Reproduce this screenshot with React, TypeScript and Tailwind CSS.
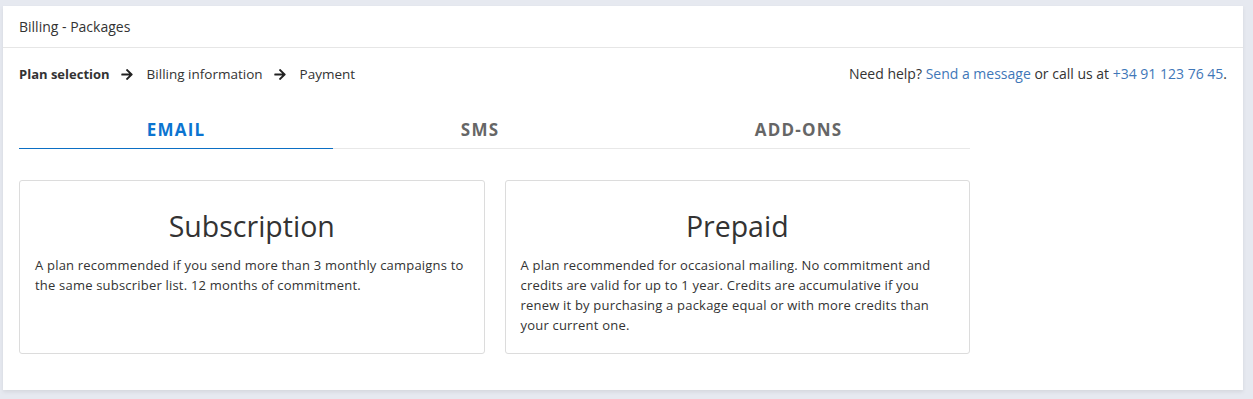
const tabs = [
  { label: 'EMAIL', active: true },
  { label: 'SMS', active: false },
  { label: 'ADD-ONS', active: false },
];

const plans = [
  {
    title: 'Subscription',
    text: 'A plan recommended if you send more than 3 monthly campaigns to the same subscriber list. 12 months of commitment.',
  },
  {
    title: 'Prepaid',
    text: 'A plan recommended for occasional mailing. No commitment and credits are valid for up to 1 year. Credits are accumulative if you renew it by purchasing a package equal or with more credits than your current one.',
  },
];

function Arrow() {
  return (
    <svg viewBox="0 0 448 512" className="mx-[11px] h-[13px] w-[12px] fill-[#222]">
      <path d="M190.5 66.9l22.2-22.2c9.4-9.4 24.6-9.4 33.9 0L441 239c9.4 9.4 9.4 24.6 0 33.9L246.6 467.3c-9.4 9.4-24.6 9.4-33.9 0l-22.2-22.2c-9.5-9.5-9.3-25 .4-34.3L311.4 296H24c-13.3 0-24-10.7-24-24v-32c0-13.3 10.7-24 24-24h287.4L190.9 101.2c-9.8-9.3-10-24.8-.4-34.3z" />
    </svg>
  );
}

export default function App() {
  return (
    <div className="min-h-[399px] bg-[#e6e9f0] pl-[3px] pr-[10px] pt-[6px] pb-[9px] font-['Open_Sans','Lato',sans-serif] text-[13px] text-[#333]">
      <div className="bg-white shadow-[0_2px_4px_rgba(0,0,0,0.08)]">
        {/* Header */}
        <div className="flex h-[42px] items-center border-b border-[#e6e6e6] px-4">
          <span className="text-[14px] text-[#333]">Billing - Packages</span>
        </div>

        <div className="px-4 pb-9">
          {/* Breadcrumb + help */}
          <div className="flex items-center justify-between pt-4 leading-5">
            <div className="flex items-center text-[13.5px]">
              <span className="text-[13px] font-bold">Plan selection</span>
              <Arrow />
              <span className="ml-[3px]">Billing information</span>
              <Arrow />
              <span className="ml-[3px]">Payment</span>
            </div>
            <div className="text-[14px]">
              Need help? <a className="text-[#3f77b8]">Send a message</a> or call us at{' '}
              <a className="text-[#3f77b8]">+34 91 123 76 45</a>.
            </div>
          </div>

          {/* Tabs */}
          <div className="mt-[22px] flex w-[951px] border-b border-[#e8e8e8]">
            {tabs.map((t) => (
              <div
                key={t.label}
                className={
                  'flex-auto -mb-px border-b pt-3 pb-[6px] text-center text-[17px] font-bold leading-6 tracking-[0.07em] ' +
                  (t.active ? 'border-[#0b6fc4] text-[#0b74d0]' : 'border-transparent text-[#666]')
                }
              >
                {t.label}
              </div>
            ))}
          </div>

          {/* Plans */}
          <div className="mt-[31px] grid w-[951px] grid-cols-2 gap-5">
            {plans.map((p) => (
              <div key={p.title} className="h-[174px] rounded-[3px] border border-[#dcdcdc] px-[15px] pt-[28px]">
                <h2 className="text-center text-[28.5px] leading-[34px] text-[#333]">{p.title}</h2>
                <p className="mt-[12px] leading-5 tracking-[0.2px] text-[#333]">{p.text}</p>
              </div>
            ))}
          </div>
        </div>
      </div>
    </div>
  );
}
